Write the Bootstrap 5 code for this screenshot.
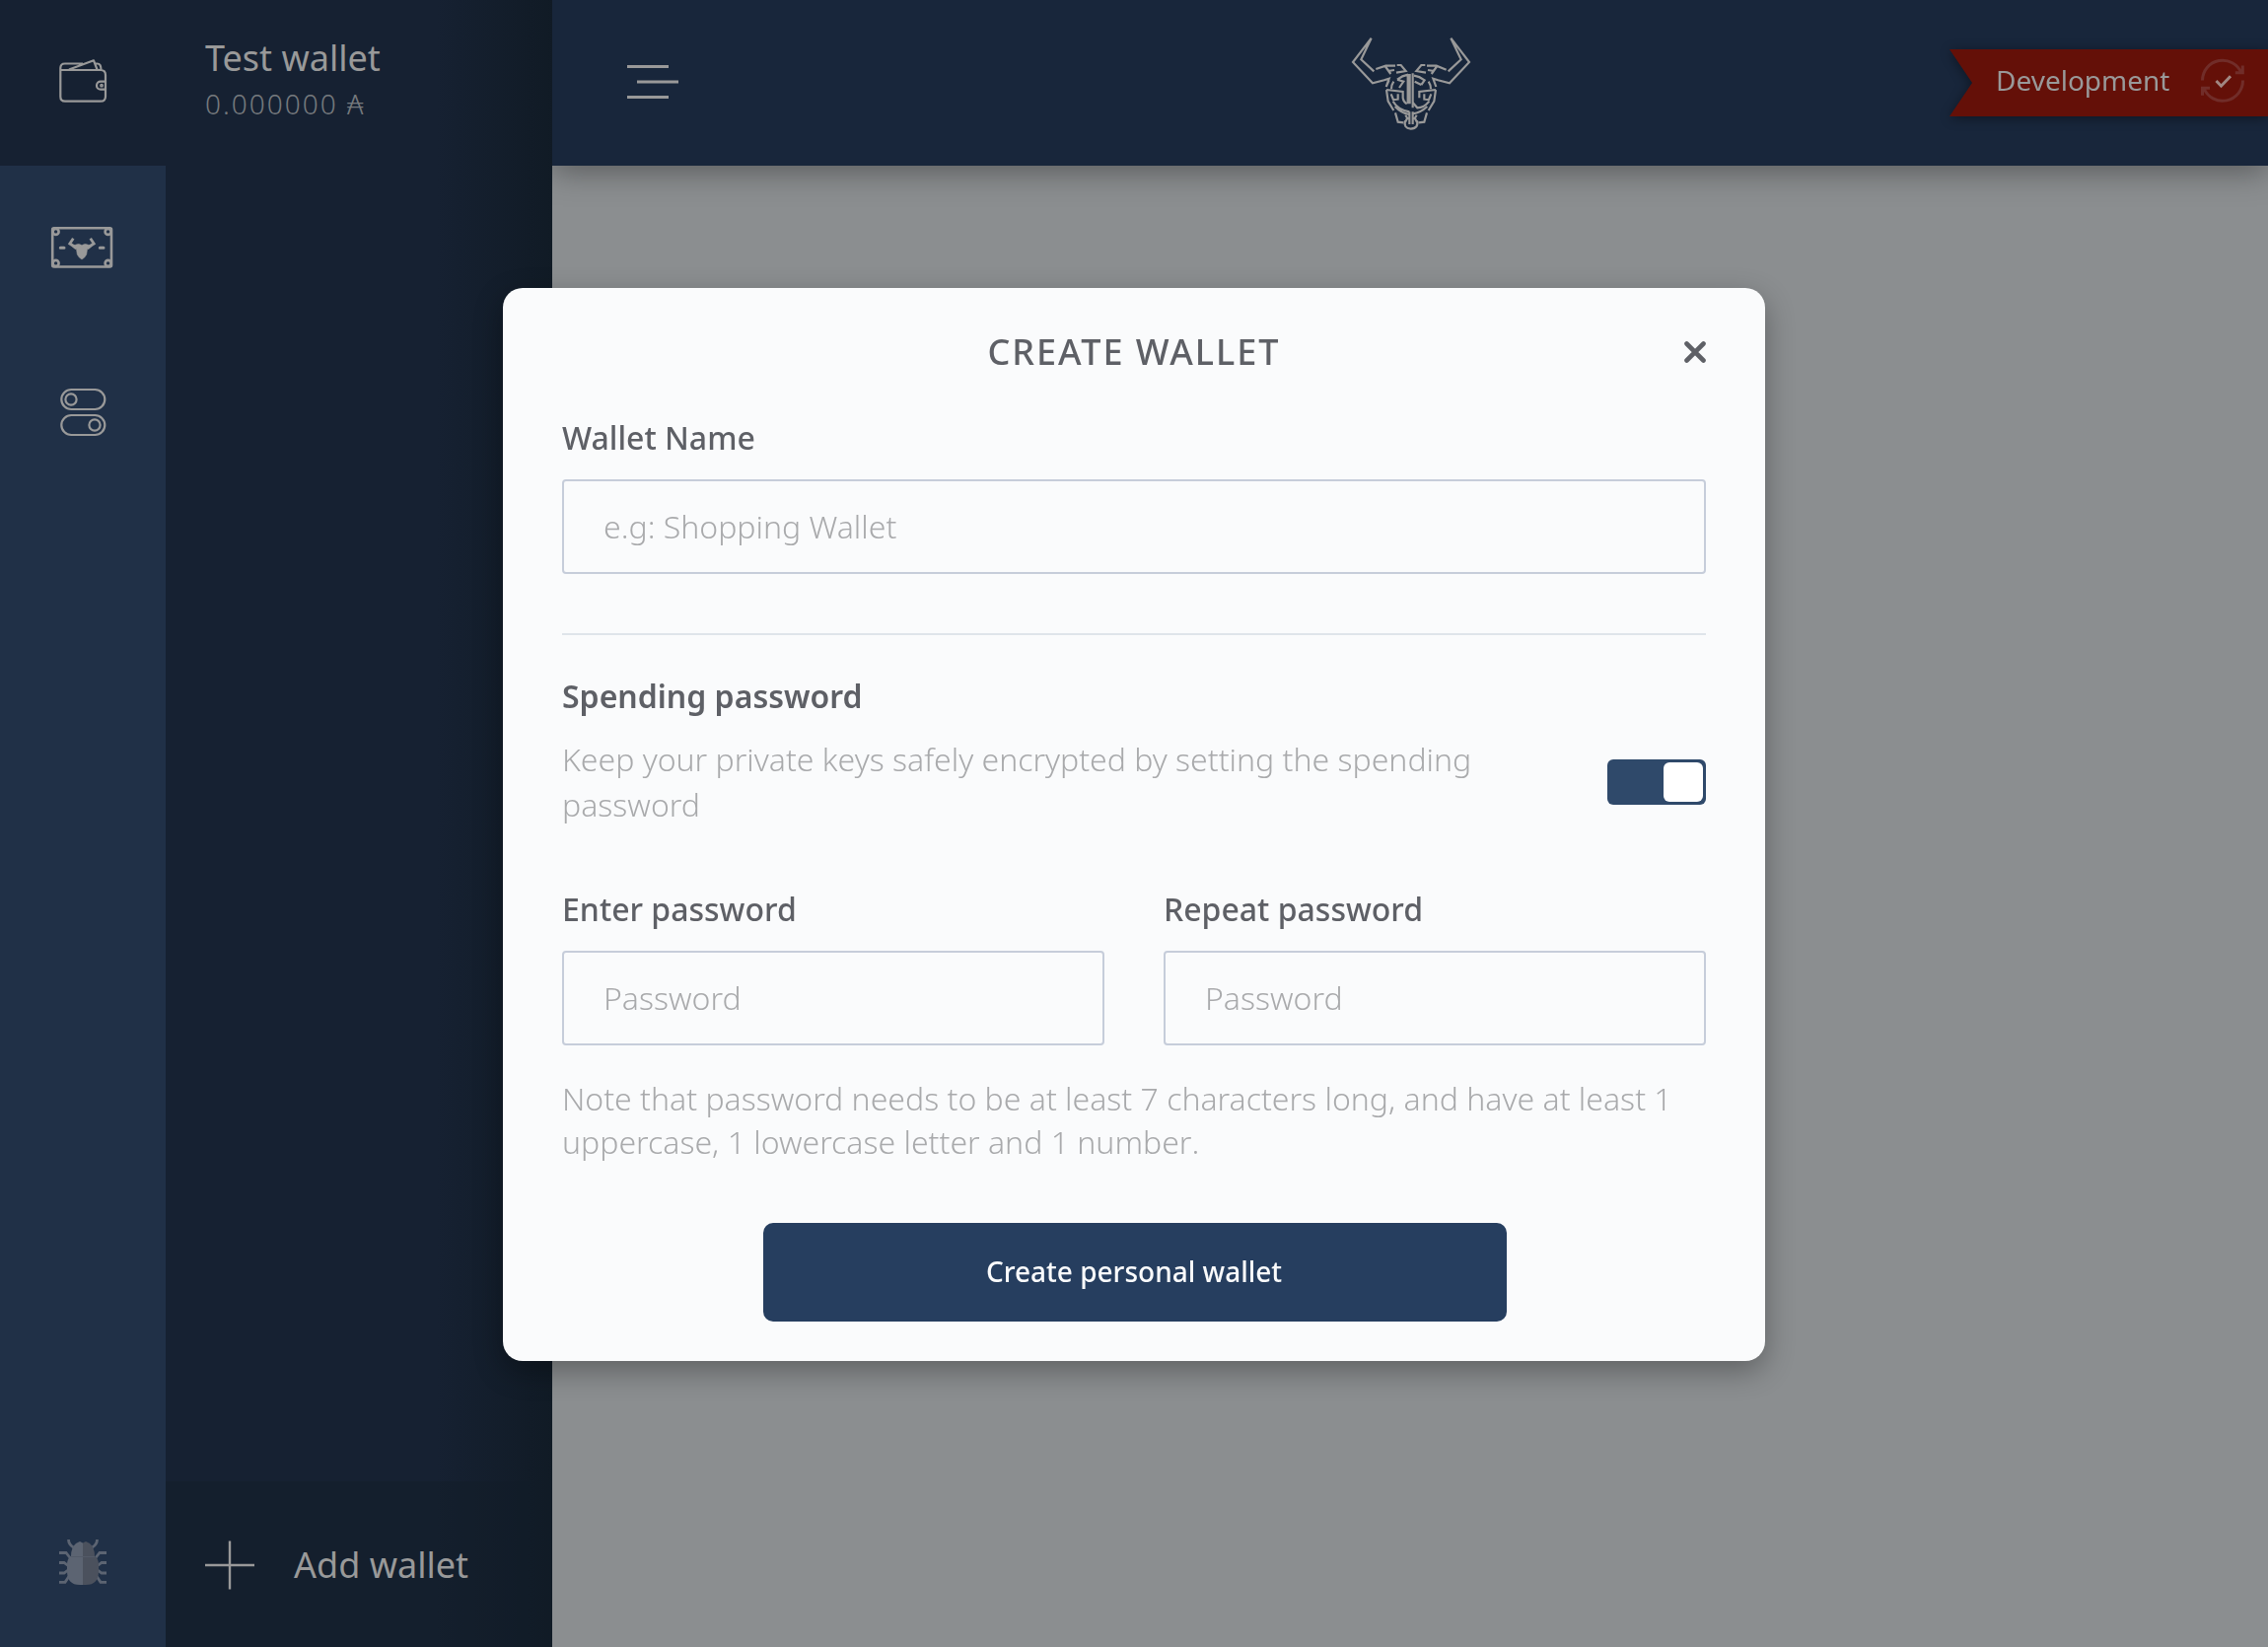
<!DOCTYPE html>
<html lang="en">
<head>
<meta charset="utf-8">
<title>Create wallet</title>
<link href="https://cdn.jsdelivr.net/npm/bootstrap@5.3.0/dist/css/bootstrap.min.css" rel="stylesheet">
<style>
  body { font-family: "Noto Sans", "Open Sans", sans-serif; width: 2300px; height: 1670px; overflow: hidden; background: #8b8e90; color: #999; }
  svg { display: block; flex: none; }
  .side-rail { width: 168px; background: #203047; }
  .rail-cell { height: 168px; }
  .rail-cell.current { background: #162132; }
  .wallet-panel { width: 392px; background: linear-gradient(90deg, rgba(16,26,36,0) 70%, rgba(16,26,36,.9) 100%), #162132; z-index: 1; }
  .wallet-item { height: 168px; padding: 34px 40px 0; }
  .wallet-title { font-size: 36px; line-height: 50px; }
  .wallet-amount { font-size: 28px; line-height: 40px; font-weight: 300; letter-spacing: 2px; color: #75797d; margin-top: 1px; }
  .add-wallet { height: 168px; padding: 2px 0 0 40px; gap: 40px; font-size: 36px; background: rgba(17,28,40,.45); }
  .top-bar { height: 168px; background: #18263b; box-shadow: 0 6px 30px rgba(0,0,0,.36); padding-left: 76px; }
  .ribbon { width: 323px; height: 68px; filter: drop-shadow(0 2px 6px rgba(0,0,0,.4)); }
  .ribbon-shape { height: 68px; background: #641008; clip-path: polygon(0 0, 100% 0, 100% 100%, 0 100%, 23px 50%); padding-left: 47px; padding-right: 23px; font-size: 28px; }
  .dev-label { padding-bottom: 6px; }
  .ribbon-shape svg { margin-bottom: 4px; }
  .overlay { padding-top: 292px; z-index: 2; }
  .wallet-modal { width: 1280px; height: 1088px; border-radius: 20px; background: #fafbfc; padding: 40px 60px 40px; box-shadow: 0 10px 30px rgba(0,0,0,.32); color: #5e6066; font-size: 32px; line-height: 44px; }
  .modal-head { height: 50px; margin-bottom: 40px; }
  .modal-head h1 { font-size: 36px; line-height: 50px; font-weight: 500; letter-spacing: 2px; }
  .field-label { font-weight: 500; height: 44px; margin-bottom: 20px; display: block; }
  .wallet-modal .form-control { height: 96px; border: 2px solid #c6cdda; border-radius: 4px; background: transparent; padding: 0 40px 2px; font-size: 32px; font-weight: 300; }
  .wallet-modal .form-control::placeholder { color: #a9aaac; opacity: 1; }
  .rule { height: 2px; background: #dfe4ea; margin: 60px 0 40px; }
  .hint { font-weight: 300; color: #a9aaac; }
  .key-row { margin: 19px 0 61px; }
  .key-row .hint { line-height: 46px; width: 1000px; }
  .pass-note { margin-top: 32px; }
  .no-kern { font-kerning: none; }
  .toggle { width: 100px; height: 46px; border-radius: 6px; background: #2f496a; padding: 3px; margin-top: 23px; }
  .toggle-knob { width: 40px; height: 40px; border-radius: 6px; background: #fff; }
  .pass-row { gap: 60px; }
  .submit { width: 754px; height: 100px; border-radius: 10px; background: #263e5f; color: #fafbfc; font-size: 28px; font-weight: 500; border: 0; padding: 0 2px 2px 0; margin-left: 2px; }
  .bull-logo { margin: 2px 467px 0 0; }
</style>
<script src="https://cdn.jsdelivr.net/npm/bootstrap@5.3.0/dist/js/bootstrap.bundle.min.js"></script>
</head>
<body>
<div class="d-flex h-100">
  <nav class="side-rail d-flex flex-column h-100">
    <div class="rail-cell current">
      <svg width="168" height="168" fill="none" stroke="#999" stroke-width="2.2" stroke-linejoin="round">
        <path d="M61.300 71v27q0 4.700 4.700 4.700H102q5 0 5-5V76q0-5-5-5H61.300V69q0-4.500 4.500-4.500H84M70 70.500l25-9.200 3.500 9.200M95.500 64.500h3q4 0 4 6M107 82.700h-5a4 4 0 0 0 0 8h5"/>
        <circle cx="103" cy="86.700" r=".8"/>
      </svg>
    </div>
    <div class="rail-cell">
      <svg width="168" height="168" viewBox="0 168 168 168" fill="none" stroke="#999" stroke-width="2.600">
        <rect x="53.200" y="231.200" width="59.800" height="39.300" rx="1.500"/>
        <circle cx="56.600" cy="234.900" r="3"/><circle cx="109.600" cy="234.900" r="3"/><circle cx="56.600" cy="266.900" r="3"/><circle cx="109.600" cy="266.900" r="3"/>
        <path d="M61.300 251.200h3.700M101.300 251.200h3.700" stroke-width="3" stroke-linecap="round"/>
        <path d="M74.300 241.800L70.800 247 77 251M91.700 241.800L95.200 247 89 251" stroke-width="2.800"/>
        <path d="M76 248.500q4-2 7 .3 3-2.300 7-.3l3 1-3 3h-1.500l-.8 5.500-2 3-2.700 2-2.700-2-2-3-.8-5.500h-1.500l-3-3z" fill="#999" stroke-width=".6"/>
      </svg>
    </div>
    <div class="rail-cell">
      <svg width="168" height="168" viewBox="0 336 168 168" fill="none" stroke="#999" stroke-width="2.200">
        <rect x="62.300" y="395" width="44" height="20" rx="10"/><circle cx="72" cy="405" r="5.600"/>
        <rect x="62.300" y="421" width="44" height="20" rx="10"/><circle cx="96" cy="431" r="5.600"/>
      </svg>
    </div>
    <div class="rail-cell mt-auto">
      <svg width="168" height="168" viewBox="0 1502 168 168" fill="none" stroke="#5c6472" stroke-width="2.800">
        <path d="M69.500 1561q0 5 5 8M98.500 1561q0 5-5 8M60 1574.500h7l4 5M108 1574.500h-7l-4 5M60 1584.500h5l4 3M108 1584.500h-5l-4 3M60 1595h5l4-3M108 1595h-5l-4-3M60 1604.300h6l4-6M108 1604.300h-6l-4-6"/>
        <path d="M84 1564.500l-3-1.500-4 2q-5 4-5 13-4 2-4 9v6q0 14 13 14h3z" fill="#5c6472" stroke="none"/>
        <path d="M84 1564.500l3-1.500 4 2q5 4 5 13 4 2 4 9v6q0 14-13 14h-3z" fill="#4b515d" stroke="none"/>
        <path d="M72 1578.500H96" stroke="#535b68" stroke-width="1"/>
      </svg>
    </div>
  </nav>

  <aside class="wallet-panel position-relative d-flex flex-column h-100">
    <div class="wallet-item">
      <div class="wallet-title">Test wallet</div>
      <div class="wallet-amount">0.000000 ₳</div>
    </div>
    <div class="add-wallet mt-auto d-flex align-items-center">
      <svg width="50" height="50" stroke="#999" stroke-width="2.400"><path d="M0 25h50M25 .5v49"/></svg>
      <span>Add wallet</span>
    </div>
  </aside>

  <main class="flex-grow-1">
    <header class="top-bar d-flex align-items-center justify-content-between">
      <svg width="52" height="36" fill="#999"><path d="M0 0h42v3H0zM10 15.400h42v3H10zM0 31h42v3H0z"/></svg>
      <svg class="bull-logo ms-auto" width="160" height="130" viewBox="0 0 480 390" fill="none" stroke="#999" stroke-width="6.500">
        <path d="M122 56L66 129 126 193 161 184 176 179 167 204M122 56L91 121 130 157M136 150L166 140H195M164 141L181 165M173 156L192 153M200 138H212L227 156 198 161M176 184L167 204"/>
        <path d="M364 56L420 129 360 193 325 184 310 179 319 204M364 56L395 121 356 157M350 152L320 140H291M322 141L305 165M313 156L294 153M286 138H274L259 156 288 161"/>
        <path d="M233 165V256M239 165V256M248 163V268M234 167Q216 170 201 182M201 182L220 188 207 207M190 188Q183 198 183 211M252 170Q268 172 284 184L274 198M254 188L274 198M296 188Q303 198 303 211"/>
        <path d="M168 213L218 219V238Q220 250 230 256M168 213L173 248 190 276M182 226L189 243 206 241M203 226V241M188 248Q203 274 238 280M318 213L268 219V238M318 213L313 248 296 276M304 226L297 243 280 241M283 226V241M298 248Q283 268 262 268L248 252M194 264Q214 285 238 288M292 264Q272 283 248 286"/>
        <path d="M195 283L203 311 220 313M291 283L283 311 266 313M238 280V318M248 280V318M226 290L234 304M260 290L252 304M225 307Q219 330 242 332Q267 330 261 307M225 312L233 296M261 312L253 296"/>
      </svg>
      <div class="ribbon">
        <div class="ribbon-shape d-flex align-items-center justify-content-between">
          <span class="dev-label">Development</span>
          <svg width="46" height="46" viewBox="0 0 46 46" fill="none" stroke="#712d29" stroke-width="3">
            <path d="M2.500 22.500A20.500 20.500 0 0 1 42 15M43.300 7.500V14.800H35.800M43.500 22.500A20.500 20.500 0 0 1 4 30.500M2.500 37.700V30.200H10"/>
            <path d="M16.500 23l5 5.200 9.500-10" stroke="#a18782"/>
          </svg>
        </div>
      </div>
    </header>
  </main>
</div>

<div class="overlay position-fixed top-0 start-0 w-100 h-100 d-flex justify-content-center align-items-start">
  <div class="wallet-modal d-flex flex-column" role="dialog">
    <div class="modal-head position-relative d-flex justify-content-center">
      <h1 class="m-0">CREATE WALLET</h1>
      <svg class="position-absolute end-0 top-50 translate-middle-y" width="22" height="22" stroke="#5e6066" stroke-width="4.600" stroke-linecap="round"><path d="M2.500 2.500l17 17M19.500 2.500l-17 17"/></svg>
    </div>
    <label class="field-label">Wallet Name</label>
    <input class="form-control" type="text" placeholder="e.g: Shopping Wallet">
    <div class="rule"></div>
    <div class="fw-semibold">Spending password</div>
    <div class="key-row d-flex justify-content-between align-items-start">
      <div class="hint">Keep your private keys safely encrypted by setting the spending password</div>
      <div class="toggle d-flex justify-content-end"><span class="toggle-knob"></span></div>
    </div>
    <div class="pass-row d-flex">
      <div class="flex-fill w-50"><label class="field-label">Enter password</label><input class="form-control" type="password" placeholder="Password"></div>
      <div class="flex-fill w-50"><label class="field-label">Repeat password</label><input class="form-control" type="password" placeholder="Password"></div>
    </div>
    <div class="hint pass-note">Note that password needs to be at least 7 characters long, and have at least 1 uppercase, 1 lowercase letter and 1 <span class="no-kern">number.</span></div>
    <button class="submit btn mt-auto align-self-center">Create personal wallet</button>
  </div>
</div>
</body>
</html>
